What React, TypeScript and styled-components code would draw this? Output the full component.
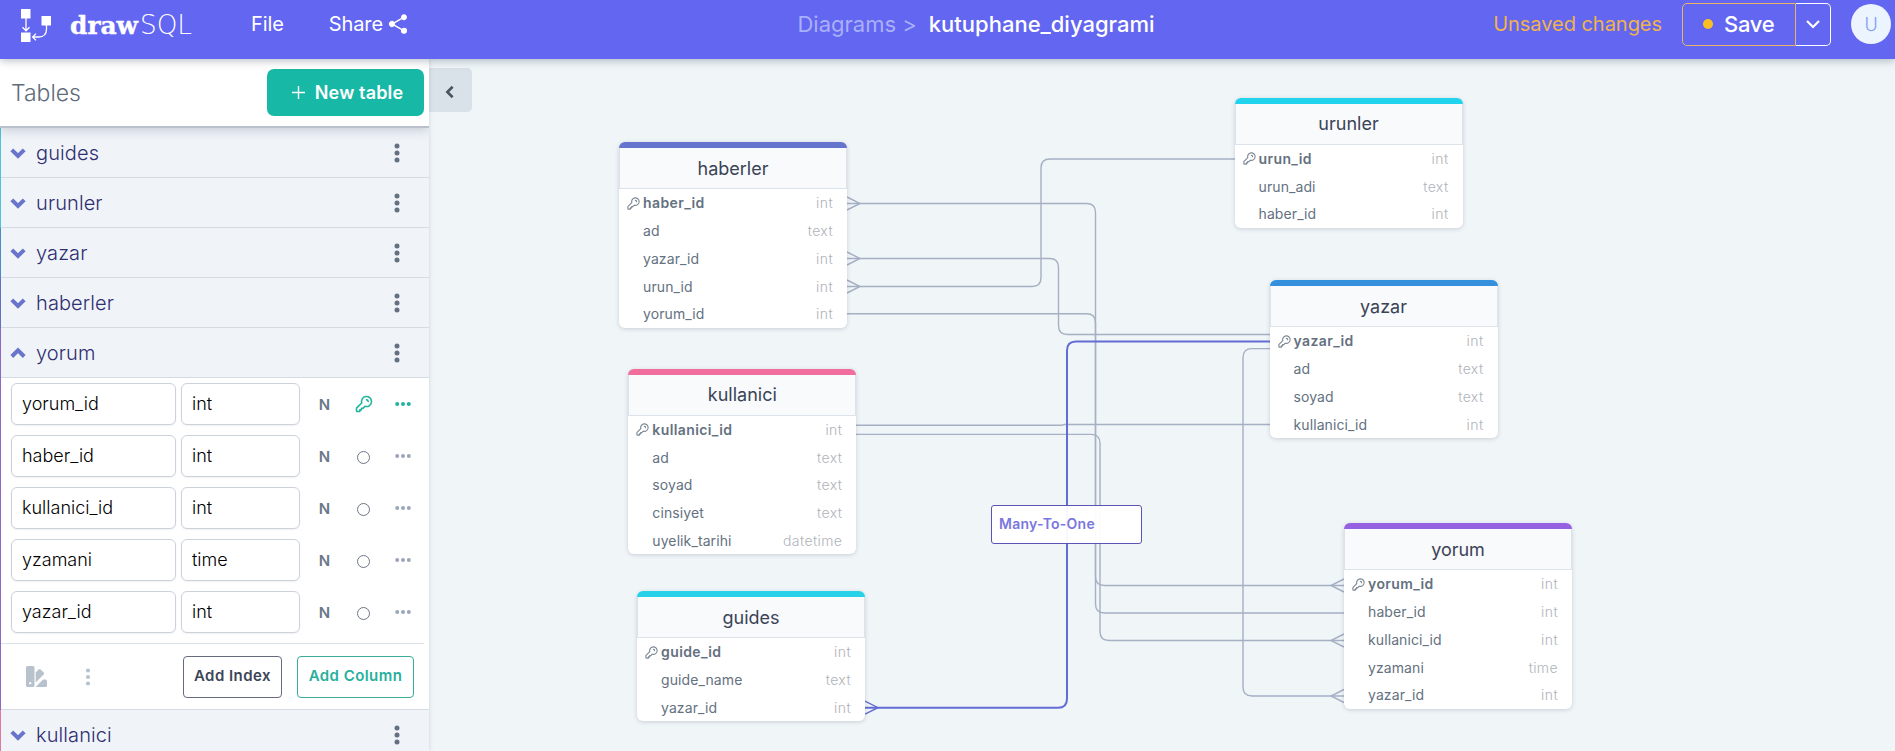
import React from "react";
import styled, { createGlobalStyle } from "styled-components";
import { IoShareSocial } from "react-icons/io5";

const Global = createGlobalStyle`
  * { box-sizing: border-box; }
  body { margin: 0; overflow: hidden; font-family: Inter, "Liberation Sans", sans-serif; }
  button, input { font-family: inherit; margin: 0; }
`;

const Page = styled.div`
  display: flex;
  flex-direction: column;
  width: 100vw;
  height: 100vh;
  overflow: hidden;
  background: #f0f5f8;
`;

const Navbar = styled.header`
  position: relative;
  z-index: 3;
  display: grid;
  grid-template-columns: 1fr auto 1fr;
  flex: none;
  height: 59px;
  padding: 0 4px 11px 20px;
  background: #6366f1;
  box-shadow: 0 2px 8px rgba(60, 75, 95, 0.35);
  color: #fff;
  font-size: 20px;
`;

const NavGroup = styled.div<{ $end?: boolean }>`
  display: flex;
  align-items: center;
  justify-content: ${(p) => (p.$end ? "flex-end" : "flex-start")};
`;

const LogoSvg = styled.svg`
  display: block;
  flex: none;
`;

const NavLink = styled.a<{ $gap: number }>`
  display: flex;
  align-items: center;
  gap: 3px;
  margin-left: ${(p) => p.$gap}px;
  letter-spacing: -0.1px;
`;

const Crumbs = styled.div`
  display: flex;
  align-items: center;
  gap: 12px;
  padding: 0 0 0 41px;
  font-size: 22px;
`;

const CrumbParent = styled.span`
  color: #a9b0fa;
`;

const CrumbCurrent = styled.span`
  font-weight: 500;
`;

const Unsaved = styled.span`
  margin-right: 20px;
  color: #f0b34e;
  letter-spacing: -0.04px;
`;

const SaveButton = styled.button`
  display: flex;
  align-items: center;
  gap: 11px;
  width: 114px;
  height: 43px;
  padding: 0 0 0 20px;
  border: 1px solid #e9b36a;
  border-radius: 5px 0 0 5px;
  background: none;
  color: #fff;
  font-size: 22px;
  font-weight: 500;
  letter-spacing: -0.3px;
`;

const Dot = styled.span`
  width: 10px;
  height: 10px;
  border-radius: 50%;
  background: #fbbf24;
`;

const SaveMenu = styled.button`
  display: flex;
  align-items: center;
  justify-content: center;
  width: 35px;
  height: 43px;
  padding: 0;
  border: 1px solid #fff;
  border-left: 0;
  border-radius: 0 5px 5px 0;
  background: none;
  color: #fff;
`;

const Avatar = styled.div`
  display: flex;
  align-items: center;
  justify-content: center;
  width: 40px;
  height: 40px;
  margin-left: 20px;
  border-radius: 50%;
  background: #ebf4ff;
  color: #7f9cf5;
  font-size: 18px;
  font-weight: 300;
`;

const Body = styled.div`
  display: flex;
  flex: 1;
  min-height: 0;
`;

const Sidebar = styled.aside`
  z-index: 2;
  display: flex;
  flex-direction: column;
  flex: none;
  width: 429px;
  overflow: hidden;
  background: #fff;
  box-shadow: 0 0 4px rgba(90, 105, 125, 0.25);
`;

const SidebarHeader = styled.div`
  z-index: 1;
  display: flex;
  flex: none;
  align-items: center;
  justify-content: space-between;
  height: 69px;
  padding: 0 5px 0 11px;
  border-bottom: 2px solid #b8c1cc;
  box-shadow: 0 2px 10px rgba(60, 75, 95, 0.25);
`;

const SidebarTitle = styled.h2`
  margin: 0;
  color: #606c7a;
  font-size: 23px;
  font-weight: 300;
`;

const NewTableButton = styled.button`
  display: flex;
  align-items: center;
  justify-content: center;
  gap: 10px;
  width: 157px;
  height: 47px;
  padding: 0 0 0 4px;
  border: 0;
  border-radius: 7px;
  background: #17b8a6;
  color: #fff;
  font-size: 18px;
  font-weight: 600;
  letter-spacing: 0.15px;
`;

const TableItem = styled.section<{ $color: string }>`
  flex: none;
  border-left: 1px solid ${(p) => p.$color};
`;

const TableItemHeader = styled.div`
  display: flex;
  align-items: center;
  height: 50px;
  padding: 0 23px 0 9px;
  border-bottom: 1px solid #d5dbe2;
  background: #f0f4f9;
`;

const TableItemName = styled.span`
  flex: 1;
  margin-left: 10px;
  color: #2f2e70;
  font-size: 20px;
  font-weight: 300;
  letter-spacing: 0.1px;
`;

const ColumnList = styled.div`
  display: flex;
  flex-direction: column;
  gap: 10px;
  margin-right: 5px;
  padding: 5px 0 10px;
  border-bottom: 1px solid #dce2ea;
`;

const ColumnRow = styled.div`
  display: flex;
  align-items: center;
  height: 42px;
  padding-left: 10px;
`;

const Field = styled.input<{ $width: number }>`
  width: ${(p) => p.$width}px;
  height: 42px;
  margin-right: 5px;
  padding: 0 10px 2px;
  border: 1px solid #cbd2dc;
  border-radius: 6px;
  background: #fff;
  box-shadow: 0 1px 2px rgba(0, 0, 0, 0.06);
  color: #000;
  font-size: 18px;
  font-weight: 300;
`;

const ColumnFlag = styled.span<{ $width: number; $active?: boolean }>`
  display: flex;
  align-items: center;
  justify-content: center;
  width: ${(p) => p.$width}px;
  color: ${(p) => (p.$active ? "#21b3a0" : "#9ba6b8")};
`;

const Nullable = styled(ColumnFlag)`
  color: #6b7788;
  font-size: 15px;
  font-weight: 600;
`;

const Ring = styled.span`
  width: 13px;
  height: 13px;
  margin-top: 2px;
  border: 1px solid #6d7686;
  border-radius: 50%;
`;

const TableActions = styled.div`
  display: flex;
  align-items: center;
  height: 66px;
  padding: 0 15px 0 25px;
  border-bottom: 1px solid #d5dbe2;
  color: #b8c2cc;
`;

const Spacer = styled.div<{ $width?: number }>`
  ${(p) => (p.$width ? `width: ${p.$width}px;` : "flex: 1;")}
`;

const OutlineButton = styled.button<{ $color: string; $line: string; $width: number }>`
  width: ${(p) => p.$width}px;
  height: 42px;
  padding: 0 0 2px;
  border: 1px solid ${(p) => p.$line};
  border-radius: 4px;
  background: #fff;
  color: ${(p) => p.$color};
  font-size: 15px;
  font-weight: 600;
  letter-spacing: 0.45px;
`;

const Canvas = styled.main`
  position: relative;
  flex: 1;
  min-width: 0;
  overflow: hidden;
`;

const CollapseButton = styled.button`
  display: flex;
  align-items: center;
  justify-content: center;
  width: 43px;
  height: 44px;
  margin-top: 9px;
  padding: 3px 2px 0 0;
  border: 0;
  border-radius: 0 5px 5px 0;
  background: #d9e2e8;
  color: #4a5562;
`;

const Links = styled.svg`
  position: absolute;
  left: -429px;
  top: -59px;
  width: 1895px;
  height: 751px;
  fill: none;
  stroke: #a5b0c3;
  stroke-width: 1.4;
`;

const Node = styled.article<{ $x: number; $y: number; $color: string }>`
  position: absolute;
  left: ${(p) => p.$x - 429}px;
  top: ${(p) => p.$y - 59}px;
  width: 228px;
  border-top: 6px solid ${(p) => p.$color};
  border-radius: 6px;
  background: #fff;
  box-shadow: 0 1px 4px rgba(60, 75, 95, 0.22);
`;

const NodeTitle = styled.div`
  display: flex;
  align-items: center;
  justify-content: center;
  height: 41px;
  border: 1px solid #dde3ea;
  border-top: 0;
  background: #f8fafc;
  color: #3b4356;
  font-size: 18px;
`;

const NodeRow = styled.div<{ $key?: boolean }>`
  display: flex;
  align-items: center;
  height: 27.75px;
  padding: 0 14px 0 7px;
  color: #64717f;
  font-size: 14px;
  font-weight: ${(p) => (p.$key ? 600 : 400)};
  letter-spacing: ${(p) => (p.$key ? 0.4 : 0.1)}px;
`;

const NodeKey = styled.span`
  display: flex;
  width: 17px;
  padding-top: 1px;
  color: #7d8894;
`;

const NodeType = styled.span`
  margin-left: auto;
  color: #b0b3ba;
  font-weight: 300;
  letter-spacing: 0.4px;
`;

const RelationLabel = styled.div`
  position: absolute;
  left: 562px;
  top: 446px;
  display: flex;
  align-items: center;
  width: 151px;
  height: 39px;
  padding: 0 0 2px 7px;
  border: 1.5px solid #5a55b5;
  border-radius: 3px;
  background: rgba(255, 255, 255, 0.95);
  color: #7a77dd;
  font-size: 14px;
  font-weight: 600;
  letter-spacing: 0.25px;
`;

function Chevron({ dir, size, stroke }: { dir: "down" | "up" | "left"; size: number; stroke: number }) {
  const d = { down: "M2 5 L8 11 L14 5", up: "M2 11 L8 5 L14 11", left: "M11 2 L5 8 L11 14" }[dir];
  return (
    <svg width={size} height={size} viewBox="0 0 16 16" fill="none" stroke="currentColor" strokeWidth={stroke}>
      <path d={d} />
    </svg>
  );
}

function Dots({ vertical, r, step, color = "currentColor" }: { vertical?: boolean; r: number; step: number; color?: string }) {
  return (
    <svg width="18" height="20" viewBox="-9 -10 18 20" fill={color}>
      {[-step, 0, step].map((o) => (
        <circle key={o} cx={vertical ? 0 : o} cy={vertical ? o : 0} r={r} />
      ))}
    </svg>
  );
}

function KeyIcon({ size, stroke }: { size: number; stroke: number }) {
  return (
    <svg
      width={size}
      height={size}
      viewBox="0 0 24 24"
      fill="none"
      stroke="currentColor"
      strokeWidth={stroke}
      strokeLinecap="round"
      strokeLinejoin="round"
    >
      <path d="M15 7a2 2 0 012 2m4 0a6 6 0 01-7.743 5.743L11 17H9v2H7v2H4a1 1 0 01-1-1v-2.586a1 1 0 01.293-.707l5.964-5.964A6 6 0 1121 9z" />
    </svg>
  );
}

function Swatches() {
  return (
    <svg width="21" height="21" viewBox="0 0 21 21" fill="currentColor">
      <path
        fillRule="evenodd"
        d="M1.5 0 H7 Q8.5 0 8.5 1.5 V19.5 Q8.5 21 7 21 H1.5 Q0 21 0 19.5 V1.5 Q0 0 1.5 0 Z M4.2 15.9 a1.2 1.2 0 1 0 0.01 0 Z"
      />
      <path d="M9.7 6.4 L12.6 3.5 Q13.6 2.6 14.6 3.5 L17.7 6.6 Q18.6 7.6 17.7 8.6 L9.7 16.6 Z" />
      <path d="M9.6 21 L17 13.6 H19.5 Q21 13.6 21 15.1 V19.5 Q21 21 19.5 21 Z" />
    </svg>
  );
}

function Logo() {
  return (
    <LogoSvg width="172" height="48" viewBox="20 0 172 48" fill="none" stroke="#fff" strokeWidth="1.3">
      <g fill="#fff" stroke="none">
        <rect x="21" y="9" width="9.5" height="9.5" />
        <rect x="21" y="32.5" width="9.5" height="9.5" />
        <rect x="41.5" y="16" width="9.5" height="9.5" />
      </g>
      <path d="M26 18 V30.5 M22.5 27.3 L26 30.8 L29.5 27.3" />
      <path d="M46.5 25 V29 Q46.5 37 38.5 37 H33 M36 33.6 L32.6 37 L36 40.4" />
      <text x="70" y="34" fill="#fff" strokeWidth="0.4" fontFamily="DejaVu Serif" fontWeight="700" fontSize="25" textLength="68" lengthAdjust="spacingAndGlyphs">draw</text>
      <text x="140" y="34" fill="#fff" stroke="none" fontFamily="DejaVu Sans Light, DejaVu Sans" fontWeight="200" fontSize="26" textLength="52" lengthAdjust="spacingAndGlyphs">SQL</text>
    </LogoSvg>
  );
}

type Column = [name: string, type: string, key?: boolean];

const yorumColumns: Column[] = [
  ["yorum_id", "int", true],
  ["haber_id", "int"],
  ["kullanici_id", "int"],
  ["yzamani", "time"],
  ["yazar_id", "int"],
];

const sidebarTables: { name: string; color: string; columns?: Column[] }[] = [
  { name: "guides", color: "#4fc3d6" },
  { name: "urunler", color: "#4fc3d6" },
  { name: "yazar", color: "#4a8cc8" },
  { name: "haberler", color: "#6470c4" },
  { name: "yorum", color: "#9067c6", columns: yorumColumns },
  { name: "kullanici", color: "#e27aa0" },
];

const nodes: { name: string; x: number; y: number; color: string; columns: Column[] }[] = [
  {
    name: "haberler", x: 619, y: 142, color: "#6574cd",
    columns: [["haber_id", "int", true], ["ad", "text"], ["yazar_id", "int"], ["urun_id", "int"], ["yorum_id", "int"]],
  },
  {
    name: "kullanici", x: 628.3, y: 368.6, color: "#f16d9b",
    columns: [["kullanici_id", "int", true], ["ad", "text"], ["soyad", "text"], ["cinsiyet", "text"], ["uyelik_tarihi", "datetime"]],
  },
  {
    name: "guides", x: 637, y: 591, color: "#27d1e8",
    columns: [["guide_id", "int", true], ["guide_name", "text"], ["yazar_id", "int"]],
  },
  {
    name: "urunler", x: 1234.5, y: 97.6, color: "#22d3ee",
    columns: [["urun_id", "int", true], ["urun_adi", "text"], ["haber_id", "int"]],
  },
  {
    name: "yazar", x: 1269.5, y: 280, color: "#3490dc",
    columns: [["yazar_id", "int", true], ["ad", "text"], ["soyad", "text"], ["kullanici_id", "int"]],
  },
  { name: "yorum", x: 1344, y: 523, color: "#9561e2", columns: yorumColumns },
];

const links = [
  "M847 286.5 H1032 Q1041 286.5 1041 277.5 V168 Q1041 159 1050 159 H1235",
  "M847 258.5 H1049.5 Q1058.5 258.5 1058.5 267.5 V325.5 Q1058.5 334.5 1067.5 334.5 H1270",
  "M847 203.5 H1086.5 Q1095.5 203.5 1095.5 212.5 V604 Q1095.5 613 1104.5 613 H1344",
  "M847 313.7 H1086.5 Q1095.5 313.7 1095.5 322.7 V576.5 Q1095.5 585.5 1104.5 585.5 H1344",
  "M856 425.2 H1062 L1064 424.5 H1270",
  "M856 434.4 H1091 Q1100 434.4 1100 443.4 V631.5 Q1100 640.5 1109 640.5 H1344",
  "M1270 348.6 H1252 Q1243 348.6 1243 357.6 V687 Q1243 696 1252 696 H1344",
  "M847 197 L860 203.5 L847 210 M847 252 L860 258.5 L847 265 M847 280 L860 286.5 L847 293",
  "M1344 579 L1331 585.5 L1344 592 M1344 634 L1331 640.5 L1344 647 M1344 689.5 L1331 696 L1344 702.5",
];

export default function App() {
  return (
    <Page>
      <Global />
      <Navbar>
        <NavGroup>
          <Logo />
          <NavLink $gap={59}>File</NavLink>
          <NavLink $gap={45}>
            Share
            <IoShareSocial size={24} />
          </NavLink>
        </NavGroup>
        <Crumbs>
          <CrumbParent>Diagrams &gt;</CrumbParent>
          <CrumbCurrent>kutuphane_diyagrami</CrumbCurrent>
        </Crumbs>
        <NavGroup $end>
          <Unsaved>Unsaved changes</Unsaved>
          <SaveButton>
            <Dot />
            Save
          </SaveButton>
          <SaveMenu>
            <Chevron dir="down" size={16} stroke={2.2} />
          </SaveMenu>
          <Avatar>U</Avatar>
        </NavGroup>
      </Navbar>
      <Body>
        <Sidebar>
          <SidebarHeader>
            <SidebarTitle>Tables</SidebarTitle>
            <NewTableButton>
              <svg width="13" height="13" viewBox="0 0 13 13" stroke="currentColor" strokeWidth="1.4">
                <path d="M6.5 0 V13 M0 6.5 H13" />
              </svg>
              New table
            </NewTableButton>
          </SidebarHeader>
          {sidebarTables.map((t) => (
            <TableItem key={t.name} $color={t.color}>
              <TableItemHeader>
                <svg width="16" height="16" viewBox="0 0 16 16" fill="none" stroke="#6974cb" strokeWidth="4">
                  <path d={t.columns ? "M1.8 11.5 L8 5.3 L14.2 11.5" : "M1.8 4.8 L8 11 L14.2 4.8"} />
                </svg>
                <TableItemName>{t.name}</TableItemName>
                <Dots vertical r={2.5} step={7} color="#64717f" />
              </TableItemHeader>
              {t.columns && (
                <>
                  <ColumnList>
                    {t.columns.map(([name, type, key]) => (
                      <ColumnRow key={name}>
                        <Field $width={165} defaultValue={name} />
                        <Field $width={119} defaultValue={type} />
                        <Nullable $width={39}>N</Nullable>
                        <ColumnFlag $width={39} $active={key}>
                          {key ? <KeyIcon size={20} stroke={1.9} /> : <Ring />}
                        </ColumnFlag>
                        <ColumnFlag $width={40} $active={key}>
                          <Dots r={2} step={5.8} />
                        </ColumnFlag>
                      </ColumnRow>
                    ))}
                  </ColumnList>
                  <TableActions>
                    <Swatches />
                    <Spacer $width={32} />
                    <Dots vertical r={2.1} step={6.5} />
                    <Spacer />
                    <OutlineButton $width={99} $color="#3d4556" $line="#646b7a">Add Index</OutlineButton>
                    <Spacer $width={15} />
                    <OutlineButton $width={117} $color="#27b09c" $line="#38ab99">Add Column</OutlineButton>
                  </TableActions>
                </>
              )}
            </TableItem>
          ))}
        </Sidebar>
        <Canvas>
          <CollapseButton>
            <Chevron dir="left" size={14} stroke={3} />
          </CollapseButton>
          <Links viewBox="0 0 1895 751">
            {links.map((d) => (
              <path key={d} d={d} />
            ))}
            <g stroke="#636cd4">
              <path strokeWidth="2" d="M865 707.7 H1058 Q1067 707.7 1067 698.7 V350.5 Q1067 341.5 1076 341.5 H1270" />
              <path d="M865 701.2 L878 707.7 L865 714.2" />
            </g>
          </Links>
          {nodes.map((n) => (
            <Node key={n.name} $x={n.x} $y={n.y} $color={n.color}>
              <NodeTitle>{n.name}</NodeTitle>
              {n.columns.map(([name, type, key]) => (
                <NodeRow key={name} $key={key}>
                  <NodeKey>{key && <KeyIcon size={15} stroke={1.8} />}</NodeKey>
                  {name}
                  <NodeType>{type}</NodeType>
                </NodeRow>
              ))}
            </Node>
          ))}
          <RelationLabel>Many-To-One</RelationLabel>
        </Canvas>
      </Body>
    </Page>
  );
}
